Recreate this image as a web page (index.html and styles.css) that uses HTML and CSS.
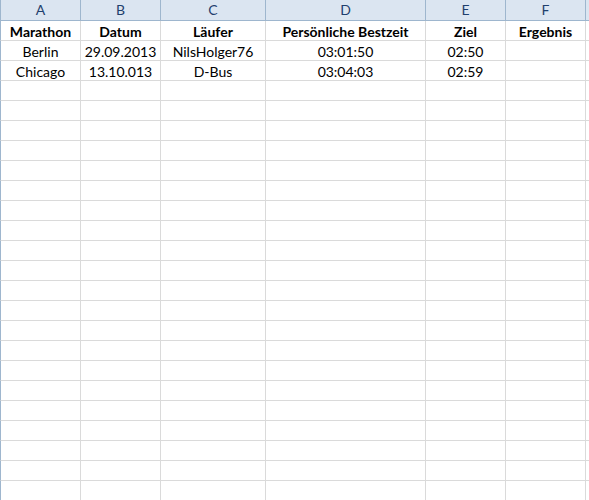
FILE: index.html
```html
<!DOCTYPE html>
<html>
<head>
<meta charset="utf-8">
<link rel="stylesheet" href="styles.css">
</head>
<body>
<div class="sheet">
  <div class="hd first">A</div><div class="hd">B</div><div class="hd">C</div><div class="hd">D</div><div class="hd">E</div><div class="hd">F</div><div class="hd tail"></div>
  <div class="c first b">Marathon</div><div class="c b">Datum</div><div class="c b">Läufer</div><div class="c b">Persönliche Bestzeit</div><div class="c b">Ziel</div><div class="c b">Ergebnis</div><div class="c tail"></div>
  <div class="c first">Berlin</div><div class="c">29.09.2013</div><div class="c">NilsHolger76</div><div class="c">03:01:50</div><div class="c">02:50</div><div class="c"></div><div class="c tail"></div>
  <div class="c first">Chicago</div><div class="c">13.10.013</div><div class="c">D-Bus</div><div class="c">03:04:03</div><div class="c">02:59</div><div class="c"></div><div class="c tail"></div>
  <div class="c first"></div><div class="c"></div><div class="c"></div><div class="c"></div><div class="c"></div><div class="c"></div><div class="c tail"></div>
  <div class="c first"></div><div class="c"></div><div class="c"></div><div class="c"></div><div class="c"></div><div class="c"></div><div class="c tail"></div>
  <div class="c first"></div><div class="c"></div><div class="c"></div><div class="c"></div><div class="c"></div><div class="c"></div><div class="c tail"></div>
  <div class="c first"></div><div class="c"></div><div class="c"></div><div class="c"></div><div class="c"></div><div class="c"></div><div class="c tail"></div>
  <div class="c first"></div><div class="c"></div><div class="c"></div><div class="c"></div><div class="c"></div><div class="c"></div><div class="c tail"></div>
  <div class="c first"></div><div class="c"></div><div class="c"></div><div class="c"></div><div class="c"></div><div class="c"></div><div class="c tail"></div>
  <div class="c first"></div><div class="c"></div><div class="c"></div><div class="c"></div><div class="c"></div><div class="c"></div><div class="c tail"></div>
  <div class="c first"></div><div class="c"></div><div class="c"></div><div class="c"></div><div class="c"></div><div class="c"></div><div class="c tail"></div>
  <div class="c first"></div><div class="c"></div><div class="c"></div><div class="c"></div><div class="c"></div><div class="c"></div><div class="c tail"></div>
  <div class="c first"></div><div class="c"></div><div class="c"></div><div class="c"></div><div class="c"></div><div class="c"></div><div class="c tail"></div>
  <div class="c first"></div><div class="c"></div><div class="c"></div><div class="c"></div><div class="c"></div><div class="c"></div><div class="c tail"></div>
  <div class="c first"></div><div class="c"></div><div class="c"></div><div class="c"></div><div class="c"></div><div class="c"></div><div class="c tail"></div>
  <div class="c first"></div><div class="c"></div><div class="c"></div><div class="c"></div><div class="c"></div><div class="c"></div><div class="c tail"></div>
  <div class="c first"></div><div class="c"></div><div class="c"></div><div class="c"></div><div class="c"></div><div class="c"></div><div class="c tail"></div>
  <div class="c first"></div><div class="c"></div><div class="c"></div><div class="c"></div><div class="c"></div><div class="c"></div><div class="c tail"></div>
  <div class="c first"></div><div class="c"></div><div class="c"></div><div class="c"></div><div class="c"></div><div class="c"></div><div class="c tail"></div>
  <div class="c first"></div><div class="c"></div><div class="c"></div><div class="c"></div><div class="c"></div><div class="c"></div><div class="c tail"></div>
  <div class="c first"></div><div class="c"></div><div class="c"></div><div class="c"></div><div class="c"></div><div class="c"></div><div class="c tail"></div>
  <div class="c first"></div><div class="c"></div><div class="c"></div><div class="c"></div><div class="c"></div><div class="c"></div><div class="c tail"></div>
  <div class="c first"></div><div class="c"></div><div class="c"></div><div class="c"></div><div class="c"></div><div class="c"></div><div class="c tail"></div>
  <div class="c first"></div><div class="c"></div><div class="c"></div><div class="c"></div><div class="c"></div><div class="c"></div><div class="c tail"></div>
</div>
</body>
</html>
```

FILE: styles.css
```css
html, body {
  margin: 0;
  padding: 0;
  background: #ffffff;
}
body {
  width: 589px;
  height: 500px;
  overflow: hidden;
}
.sheet {
  display: grid;
  grid-template-columns: 81px 80px 105px 160px 80px 80px 10px;
  grid-auto-rows: 20px;
  grid-template-rows: 21px;
  font-family: Lato, "Liberation Sans", sans-serif;
  font-size: 14px;
  color: #000;
}
.sheet > div {
  box-sizing: border-box;
  border-right: 1px solid #dadada;
  border-bottom: 1px solid #dadada;
  text-align: center;
  line-height: 21px;
  white-space: nowrap;
  overflow: hidden;
}
.sheet > .first {
  border-left: 1px solid #9eb6ce;
}
.sheet > .hd {
  background: #dbe5f1;
  border-right: 1px solid #9eb6ce;
  border-bottom: 1px solid #9eb6ce;
  color: #1f3f6e;
  line-height: 20px;
}
.sheet > .b {
  font-weight: bold;
}
.sheet > .tail {
  border-right: none;
}
```
